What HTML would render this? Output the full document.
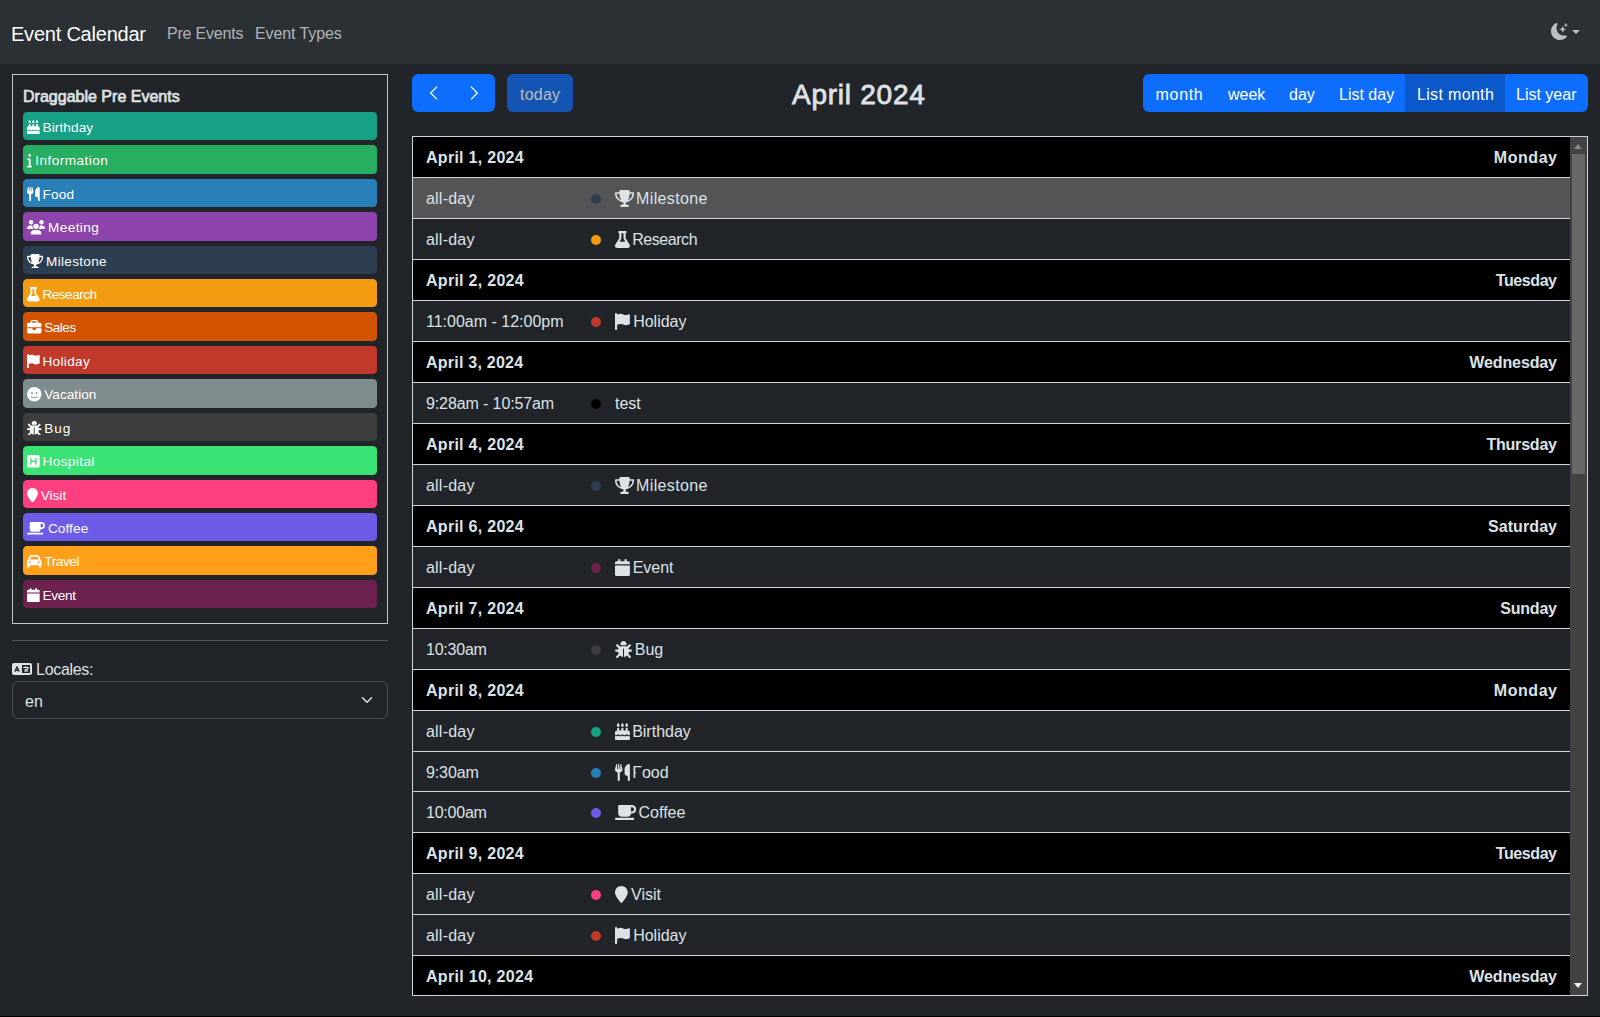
<!DOCTYPE html>
<html><head><meta charset="utf-8">
<style>
*{box-sizing:border-box;margin:0;padding:0}
html,body{width:1600px;height:1017px;overflow:hidden}
body{background:#212529;color:#dee2e6;font-family:"Liberation Sans",sans-serif;font-size:16px;position:relative}
.nav{position:absolute;left:0;top:0;width:1600px;height:64px;background:#2b3035}
.brand{position:absolute;left:11px;top:22px;font-size:20px;line-height:24px;color:#fff;letter-spacing:-0.22px;white-space:nowrap}
.nl{position:absolute;top:24px;font-size:16px;line-height:20px;color:rgba(255,255,255,.65);white-space:nowrap;letter-spacing:-0.55px}
.moon{position:absolute;left:1551px;top:23px}
.caret{position:absolute;left:1572px;top:30px;width:0;height:0;border-left:4px solid transparent;border-right:4px solid transparent;border-top:4px solid #bcbdbe}
.box{position:absolute;left:12px;top:74px;width:376px;height:550px;border:1px solid #c8c8c8}
.bt{position:absolute;left:10px;top:12px;font-size:16px;font-weight:400;-webkit-text-stroke:0.7px #dee2e6;line-height:20px;letter-spacing:0.01px;white-space:nowrap;color:#dee2e6}
.ev{position:absolute;left:10px;width:354px;height:28.4px;border:1px solid;border-radius:4px;color:#fff;font-size:13.6px;line-height:20.4px;white-space:nowrap;padding:5px 3px 0}
.evi{display:inline-block}
.evt{}
.sep{position:absolute;left:12px;top:640px;width:376px;height:1px;background:rgba(222,226,230,.25)}
.loc{position:absolute;left:12px;top:660px;white-space:nowrap;line-height:20px;letter-spacing:-0.33px}
.sel{position:absolute;left:12px;top:681px;width:376px;height:38px;border:1px solid #495057;border-radius:6px;background:#212529}
.selv{position:absolute;left:12px;top:8px;line-height:24px}
.chev{position:absolute;left:346px;top:12px}
.btn{position:absolute;top:74px;height:38px;background:#0d6efd;color:#fff;font-size:16px;line-height:24px;white-space:nowrap;border-radius:6px;overflow:hidden}
.grp1{left:412px;width:83px}
.chl{position:absolute;left:16.5px;top:11px}
.chr{position:absolute;left:57px;top:11px}
.today{left:507px;width:66px;background:#1454b3;color:#bcbdbe}
.today span{position:absolute;left:13px;top:9px;letter-spacing:0.22px}
.title{position:absolute;left:792px;top:79px;font-size:28px;line-height:32px;font-weight:400;-webkit-text-stroke:0.8px #dee2e6;letter-spacing:0.75px;white-space:nowrap;color:#dee2e6}
.grp2{left:1143px;width:445px}
.grp2 span{position:absolute;top:9px;z-index:1}
.act{position:absolute;left:262px;top:0;width:100px;height:38px;background:#0a58ca}
.list{position:absolute;left:412px;top:136px;width:1176px;height:860px;border:1px solid #ced4da;overflow:hidden;background:#212529}
.row{position:absolute;left:0;width:1157px;height:42px;border-top:1px solid #ced4da}
.row.h{background:#000;font-weight:700}
.row.h .t,.row.h .d{top:9.4px}
.row.hov{background:#535557}
.row .t{position:absolute;left:13px;top:9.4px;line-height:24px;white-space:nowrap}
.row .d{position:absolute;right:13px;top:10px;line-height:24px;white-space:nowrap}
.row .dot{position:absolute;left:178px;top:16px;width:10px;height:10px;border-radius:5px}
.row .ti{position:absolute;left:202px;top:9.4px;line-height:24px;white-space:nowrap}
.sb{position:absolute;left:1157px;top:0;width:17px;height:858px;background:#424242}
.sbu{position:absolute;left:4px;top:7px;width:0;height:0;border-left:4.5px solid transparent;border-right:4.5px solid transparent;border-bottom:5px solid #8a8a8a}
.sbd{position:absolute;left:4px;bottom:7px;width:0;height:0;border-left:4.5px solid transparent;border-right:4.5px solid transparent;border-top:5px solid #f0f0f0}
.thumb{position:absolute;left:2px;top:17px;width:13px;height:320px;background:#686868}

</style></head><body>
<div class="nav">
<div class="brand">Event Calendar</div>
<div class="nl" style="left:167px;letter-spacing:-0.2px">Pre Events</div>
<div class="nl" style="left:255px;letter-spacing:-0.1px">Event Types</div>
<svg class="moon" width="17" height="17" viewBox="0 0 16 16"><path fill="#bcbdbe" d="M6 .278a.768.768 0 0 1 .08.858 7.208 7.208 0 0 0-.878 3.46c0 4.021 3.278 7.277 7.318 7.277.527 0 1.04-.055 1.533-.16a.787.787 0 0 1 .81.316.733.733 0 0 1-.031.893A8.349 8.349 0 0 1 8.344 16C3.734 16 0 12.286 0 7.71 0 4.266 2.114 1.312 5.124.06A.752.752 0 0 1 6 .278z"/><path fill="#bcbdbe" d="M10.794 3.148a.217.217 0 0 1 .412 0l.387 1.162c.173.518.579.924 1.097 1.097l1.162.387a.217.217 0 0 1 0 .412l-1.162.387a1.734 1.734 0 0 0-1.097 1.097l-.387 1.162a.217.217 0 0 1-.412 0l-.387-1.162A1.734 1.734 0 0 0 9.31 6.593l-1.162-.387a.217.217 0 0 1 0-.412l1.162-.387a1.734 1.734 0 0 0 1.097-1.097l.387-1.162zM13.863.099a.145.145 0 0 1 .274 0l.258.774c.115.346.386.617.732.732l.774.258a.145.145 0 0 1 0 .274l-.774.258a1.156 1.156 0 0 0-.732.732l-.258.774a.145.145 0 0 1-.274 0l-.258-.774a1.156 1.156 0 0 0-.732-.732l-.774-.258a.145.145 0 0 1 0-.274l.774-.258c.346-.115.617-.386.732-.732L13.863.1z"/></svg>
<div class="caret"></div>
</div>
<div class="box"><div class="bt">Draggable Pre Events</div>
<div class="ev" style="top:36.90px;background:#16a085;border-color:#16a085"><span class="evi"><svg width="12.69" height="14.50" viewBox="0 0 448 512" style="vertical-align:-2.5px;margin-right:-1px"><path fill="#fff" d="M86.4 5.5L61.8 47.6C58 54.1 56 61.6 56 69.2V72c0 22.1 17.9 40 40 40s40-17.9 40-40V69.2c0-7.6-2-15-5.8-21.6L105.6 5.5C103.6 2.1 100 0 96 0s-7.6 2.1-9.6 5.5zm128 0L189.8 47.6c-3.8 6.5-5.8 14-5.8 21.6V72c0 22.1 17.9 40 40 40s40-17.9 40-40V69.2c0-7.6-2-15-5.8-21.6L233.6 5.5C231.6 2.1 228 0 224 0s-7.6 2.1-9.6 5.5zM317.8 47.6c-3.8 6.5-5.8 14-5.8 21.6V72c0 22.1 17.9 40 40 40s40-17.9 40-40V69.2c0-7.6-2-15-5.8-21.6L361.6 5.5C359.6 2.1 356 0 352 0s-7.6 2.1-9.6 5.5L317.8 47.6zM128 176c0-17.7-14.3-32-32-32s-32 14.3-32 32v48c-35.3 0-64 28.7-64 64v71c8.3 5.2 18.1 9 28.8 9c13.5 0 27.2-6.1 38.4-13.4c5.4-3.5 9.9-7.1 13-9.7c1.5-1.3 2.7-2.4 3.5-3.1c.4-.4 .7-.6 .8-.8l.1-.1c3.1-3.2 7.4-4.9 11.9-4.8s8.6 2.1 11.6 5.4l.1 .1c.1 .1 .4 .4 .7 .7c.7 .7 1.7 1.7 3.1 3c2.8 2.6 6.8 6.1 11.8 9.5c10.2 7.1 23 13.1 36.3 13.1s26.1-6 36.3-13.1c5-3.5 9-6.9 11.8-9.5c1.4-1.3 2.4-2.3 3.1-3c.3-.3 .6-.6 .7-.7l.1-.1c3-3.5 7.4-5.4 12-5.4s9 2 12 5.4l.1 .1c.1 .1 .4 .4 .7 .7c.7 .7 1.7 1.7 3.1 3c2.8 2.6 6.8 6.1 11.8 9.5c10.2 7.1 23 13.1 36.3 13.1s26.1-6 36.3-13.1c5-3.5 9-6.9 11.8-9.5c1.4-1.3 2.4-2.3 3.1-3c.3-.3 .6-.6 .7-.7l.1-.1c2.9-3.4 7.1-5.3 11.6-5.4s8.7 1.6 11.9 4.8l.1 .1c.2 .2 .4 .4 .8 .8c.8 .7 1.9 1.8 3.5 3.1c3.1 2.6 7.5 6.2 13 9.7c11.2 7.3 24.9 13.4 38.4 13.4c10.7 0 20.5-3.9 28.8-9V288c0-35.3-28.7-64-64-64V176c0-17.7-14.3-32-32-32s-32 14.3-32 32v48H256V176c0-17.7-14.3-32-32-32s-32 14.3-32 32v48H128V176zM448 394.6c-8.5 3.3-18.2 5.4-28.8 5.4c-22.5 0-42.4-9.9-55.8-18.6c-4.1-2.7-7.8-5.4-10.9-7.8c-2.8 2.4-6.1 5-9.8 7.5C329.8 390 310.6 400 288 400s-41.8-10-54.6-18.9c-3.5-2.4-6.7-4.9-9.4-7.2c-2.7 2.3-5.9 4.7-9.4 7.2C201.8 390 182.6 400 160 400s-41.8-10-54.6-18.9c-3.7-2.6-7-5.2-9.8-7.5c-3.1 2.4-6.8 5.1-11 7.8C71.2 390.1 51.3 400 28.8 400c-10.6 0-20.3-2.2-28.8-5.4V480c0 17.7 14.3 32 32 32H416c17.7 0 32-14.3 32-32V394.6z"/></svg></span> <span class="evt" style="letter-spacing:0.114px">Birthday</span></div>
<div class="ev" style="top:70.33px;background:#27ae60;border-color:#27ae60"><span class="evi"><svg width="5.44" height="14.50" viewBox="0 0 192 512" style="vertical-align:-2.5px;margin-right:-1px"><path fill="#fff" d="M48 80a48 48 0 1 1 96 0A48 48 0 1 1 48 80zM0 224c0-17.7 14.3-32 32-32H96c17.7 0 32 14.3 32 32V448h32c17.7 0 32 14.3 32 32s-14.3 32-32 32H32c-17.7 0-32-14.3-32-32s14.3-32 32-32H64V256H32c-17.7 0-32-14.3-32-32z"/></svg></span> <span class="evt" style="letter-spacing:0.45px">Information</span></div>
<div class="ev" style="top:103.76px;background:#2980b9;border-color:#2980b9"><span class="evi"><svg width="12.69" height="14.50" viewBox="0 0 448 512" style="vertical-align:-2.5px;margin-right:-1px"><path fill="#fff" d="M416 0C400 0 288 32 288 176V288c0 35.3 28.7 64 64 64h32V480c0 17.7 14.3 32 32 32s32-14.3 32-32V352 240 32c0-17.7-14.3-32-32-32zM64 16C64 7.8 57.9 1 49.7 .1S34.2 4.6 32.4 12.5L2.1 148.8C.7 155.1 0 161.5 0 167.9c0 45.9 35.1 83.6 80 87.7V480c0 17.7 14.3 32 32 32s32-14.3 32-32V255.6c44.9-4.1 80-41.8 80-87.7c0-6.4-.7-12.8-2.1-19.1L191.6 12.5c-1.8-8-9.3-13.3-17.4-12.4S160 7.8 160 16V150.2c0 5.4-4.4 9.8-9.8 9.8c-5.1 0-9.3-3.9-9.8-9L127.9 14.6C127.2 6.3 120.3 0 112 0s-15.2 6.3-15.9 14.6L83.7 151c-.5 5.1-4.7 9-9.8 9c-5.4 0-9.8-4.4-9.8-9.8V16z"/></svg></span> <span class="evt" style="letter-spacing:0.2px">Food</span></div>
<div class="ev" style="top:137.19px;background:#8e44ad;border-color:#8e44ad"><span class="evi"><svg width="18.12" height="14.50" viewBox="0 0 640 512" style="vertical-align:-2.5px;margin-right:-1px"><path fill="#fff" d="M144 0a80 80 0 1 1 0 160A80 80 0 1 1 144 0zM512 0a80 80 0 1 1 0 160A80 80 0 1 1 512 0zM0 298.7C0 239.8 47.8 192 106.7 192h42.7c15.9 0 31 3.5 44.6 9.7c-1.3 7.2-1.9 14.7-1.9 22.3c0 38.2 16.8 72.5 43.3 96c-.2 0-.4 0-.7 0H21.3C9.6 320 0 310.4 0 298.7zM405.3 320c-.2 0-.4 0-.7 0c26.6-23.5 43.3-57.8 43.3-96c0-7.6-.7-15-1.9-22.3c13.6-6.3 28.7-9.7 44.6-9.7h42.7C592.2 192 640 239.8 640 298.7c0 11.8-9.6 21.3-21.3 21.3H405.3zM224 224a96 96 0 1 1 192 0 96 96 0 1 1 -192 0zM128 485.3C128 411.7 187.7 352 261.3 352H378.7C452.3 352 512 411.7 512 485.3c0 14.7-11.9 26.7-26.7 26.7H154.7c-14.7 0-26.7-11.9-26.7-26.7z"/></svg></span> <span class="evt" style="letter-spacing:0.433px">Meeting</span></div>
<div class="ev" style="top:170.62px;background:#2c3e50;border-color:#2c3e50"><span class="evi"><svg width="16.31" height="14.50" viewBox="0 0 576 512" style="vertical-align:-2.5px;margin-right:-1px"><path fill="#fff" d="M400 0H176c-26.5 0-48.1 21.8-47.1 48.2c.2 5.3 .4 10.6 .7 15.8H24C10.7 64 0 74.7 0 88c0 92.6 33.5 157 78.5 200.7c44.3 43.1 98.3 64.8 138.1 75.8c23.4 6.5 39.4 26 39.4 45.6c0 20.9-17 37.9-37.9 37.9H192c-17.7 0-32 14.3-32 32s14.3 32 32 32H384c17.7 0 32-14.3 32-32s-14.3-32-32-32H357.9C337 448 320 431 320 410.1c0-19.6 15.9-39.2 39.4-45.6c39.9-11 93.9-32.7 138.2-75.8C542.5 245 576 180.6 576 88c0-13.3-10.7-24-24-24H446.4c.3-5.2 .5-10.4 .7-15.8C448.1 21.8 426.5 0 400 0zM48.9 112h84.4c9.1 90.1 29.2 150.3 51.9 190.6c-24.9-11-50.8-26.5-73.2-48.3c-32-31.1-58-76-63-142.3zM464.1 254.3c-22.4 21.8-48.3 37.3-73.2 48.3c22.7-40.3 42.8-100.5 51.9-190.6h84.4c-5.1 66.3-31.1 111.2-63 142.3z"/></svg></span> <span class="evt" style="letter-spacing:0.287px">Milestone</span></div>
<div class="ev" style="top:204.05px;background:#f39c12;border-color:#f39c12"><span class="evi"><svg width="12.69" height="14.50" viewBox="0 0 448 512" style="vertical-align:-2.5px;margin-right:-1px"><path fill="#fff" d="M288 0H160 128C110.3 0 96 14.3 96 32s14.3 32 32 32V196.8c0 11.8-3.3 23.5-9.5 33.5L10.3 406.2C3.6 417.2 0 429.7 0 442.6C0 480.9 31.1 512 69.4 512H378.6c38.3 0 69.4-31.1 69.4-69.4c0-12.8-3.6-25.4-10.3-36.4L329.5 230.4c-6.2-10.1-9.5-21.7-9.5-33.5V64c17.7 0 32-14.3 32-32s-14.3-32-32-32H288zM192 196.8V64h64V196.8c0 23.7 6.6 46.9 19 67.1L309.5 320h-171L173 263.9c12.4-20.2 19-43.4 19-67.1z"/></svg></span> <span class="evt" style="letter-spacing:-0.514px">Research</span></div>
<div class="ev" style="top:237.48px;background:#d35400;border-color:#d35400"><span class="evi"><svg width="14.50" height="14.50" viewBox="0 0 512 512" style="vertical-align:-2.5px;margin-right:-1px"><path fill="#fff" d="M184 48H328c4.4 0 8 3.6 8 8V96H176V56c0-4.4 3.6-8 8-8zm-56 8V96H64C28.7 96 0 124.7 0 160v96H192 320 512V160c0-35.3-28.7-64-64-64H384V56c0-30.9-25.1-56-56-56H184c-30.9 0-56 25.1-56 56zM512 288H320v32c0 17.7-14.3 32-32 32H224c-17.7 0-32-14.3-32-32V288H0V416c0 35.3 28.7 64 64 64H448c35.3 0 64-28.7 64-64V288z"/></svg></span> <span class="evt" style="letter-spacing:-0.525px">Sales</span></div>
<div class="ev" style="top:270.91px;background:#c0392b;border-color:#c0392b"><span class="evi"><svg width="12.69" height="14.50" viewBox="0 0 448 512" style="vertical-align:-2.5px;margin-right:-1px"><path fill="#fff" d="M64 32C64 14.3 49.7 0 32 0S0 14.3 0 32V64 368 480c0 17.7 14.3 32 32 32s32-14.3 32-32V352l64.3-16.1c41.1-10.3 84.6-5.5 122.5 13.4c44.2 22.1 95.5 24.8 141.7 7.4l34.7-13c12.5-4.7 20.8-16.6 20.8-30V66.1c0-23-24.2-38-44.8-27.7l-9.6 4.8c-46.3 23.2-100.8 23.2-147.1 0c-35.1-17.6-75.4-22-113.5-12.5L64 48V32z"/></svg></span> <span class="evt" style="letter-spacing:0.333px">Holiday</span></div>
<div class="ev" style="top:304.34px;background:#7f8c8d;border-color:#7f8c8d"><span class="evi"><svg width="14.50" height="14.50" viewBox="0 0 512 512" style="vertical-align:-2.5px;margin-right:-1px"><path fill="#fff" d="M256 512A256 256 0 1 0 256 0a256 256 0 1 0 0 512zM164.1 325.5C182 346.2 212.6 368 256 368s74-21.8 91.9-42.5c5.8-6.7 15.9-7.4 22.6-1.6s7.4 15.9 1.6 22.6C349.8 372.1 311.1 400 256 400s-93.8-27.9-116.1-53.5c-5.8-6.7-5.1-16.8 1.6-22.6s16.8-5.1 22.6 1.6zM144.4 208a32 32 0 1 1 64 0 32 32 0 1 1 -64 0zm192-32a32 32 0 1 1 0 64 32 32 0 1 1 0-64z"/></svg></span> <span class="evt" style="letter-spacing:0.029px">Vacation</span></div>
<div class="ev" style="top:337.77px;background:#3d3d3d;border-color:#3d3d3d"><span class="evi"><svg width="14.50" height="14.50" viewBox="0 0 512 512" style="vertical-align:-2.5px;margin-right:-1px"><path fill="#fff" d="M256 0c53 0 96 43 96 96v3.6c0 15.7-12.7 28.4-28.4 28.4H188.4c-15.7 0-28.4-12.7-28.4-28.4V96c0-53 43-96 96-96zM41.4 105.4c12.5-12.5 32.8-12.5 45.3 0l64 64c.7 .7 1.3 1.4 1.9 2.1c14.2-7.3 30.4-11.4 47.5-11.4H312c17.1 0 33.2 4.1 47.5 11.4c.6-.7 1.2-1.4 1.9-2.1l64-64c12.5-12.5 32.8-12.5 45.3 0s12.5 32.8 0 45.3l-64 64c-.7 .7-1.4 1.3-2.1 1.9c6.2 12 10.1 25.3 11.1 39.5H480c17.7 0 32 14.3 32 32s-14.3 32-32 32H416c0 24.6-5.5 47.8-15.4 68.6c2.2 1.3 4.2 2.9 6 4.8l64 64c12.5 12.5 12.5 32.8 0 45.3s-32.8 12.5-45.3 0l-63.1-63.1c-24.5 21.8-55.8 36.2-90.3 39.6V240c0-8.8-7.2-16-16-16s-16 7.2-16 16V479.2c-34.5-3.4-65.8-17.8-90.3-39.6L86.6 502.6c-12.5 12.5-32.8 12.5-45.3 0s-12.5-32.8 0-45.3l64-64c1.9-1.9 3.9-3.4 6-4.8C101.5 367.8 96 344.6 96 320H32c-17.7 0-32-14.3-32-32s14.3-32 32-32H96.3c1.1-14.1 5-27.5 11.1-39.5c-.7-.6-1.4-1.2-2.1-1.9l-64-64c-12.5-12.5-12.5-32.8 0-45.3z"/></svg></span> <span class="evt" style="letter-spacing:0.95px">Bug</span></div>
<div class="ev" style="top:371.20px;background:#3ae374;border-color:#3ae374"><span class="evi"><svg width="12.69" height="14.50" viewBox="0 0 448 512" style="vertical-align:-2.5px;margin-right:-1px"><path fill="#fff" d="M64 32C28.7 32 0 60.7 0 96V416c0 35.3 28.7 64 64 64H384c35.3 0 64-28.7 64-64V96c0-35.3-28.7-64-64-64H64zM336 152V256 360c0 13.3-10.7 24-24 24s-24-10.7-24-24V280H160l0 80c0 13.3-10.7 24-24 24s-24-10.7-24-24l0-208c0-13.3 10.7-24 24-24s24 10.7 24 24v80H288V152c0-13.3 10.7-24 24-24s24 10.7 24 24z"/></svg></span> <span class="evt" style="letter-spacing:0.4px">Hospital</span></div>
<div class="ev" style="top:404.63px;background:#ff3f7f;border-color:#ff3f7f"><span class="evi"><svg width="10.88" height="14.50" viewBox="0 0 384 512" style="vertical-align:-2.5px;margin-right:-1px"><path fill="#fff" d="M384 192c0 87.4-117 243-168.3 307.2c-12.3 15.3-35.1 15.3-47.4 0C117 435 0 279.4 0 192C0 86 86 0 192 0S384 86 384 192z"/></svg></span> <span class="evt" style="letter-spacing:0.025px">Visit</span></div>
<div class="ev" style="top:438.06px;background:#6c5ce7;border-color:#6c5ce7"><span class="evi"><svg width="18.12" height="14.50" viewBox="0 0 640 512" style="vertical-align:-2.5px;margin-right:-1px"><path fill="#fff" d="M96 64c0-17.7 14.3-32 32-32H448h64c70.7 0 128 57.3 128 128s-57.3 128-128 128H480c0 53-43 96-96 96H192c-53 0-96-43-96-96V64zM480 224h32c35.3 0 64-28.7 64-64s-28.7-64-64-64H480V224zM32 416H544c17.7 0 32 14.3 32 32s-14.3 32-32 32H32c-17.7 0-32-14.3-32-32s14.3-32 32-32z"/></svg></span> <span class="evt" style="letter-spacing:0.1px">Coffee</span></div>
<div class="ev" style="top:471.49px;background:#ff9f1a;border-color:#ff9f1a"><span class="evi"><svg width="14.50" height="14.50" viewBox="0 0 512 512" style="vertical-align:-2.5px;margin-right:-1px"><path fill="#fff" d="M135.2 117.4L109.1 192H402.9l-26.1-74.6C372.3 104.6 360.2 96 346.6 96H165.4c-13.6 0-25.7 8.6-30.2 21.4zM39.6 196.8L74.8 96.3C88.3 57.8 124.6 32 165.4 32H346.6c40.8 0 77.1 25.8 90.6 64.3l35.2 100.5c23.2 9.6 39.6 32.5 39.6 59.2V400v48c0 17.7-14.3 32-32 32H448c-17.7 0-32-14.3-32-32V400H96v48c0 17.7-14.3 32-32 32H32c-17.7 0-32-14.3-32-32V400 256c0-26.7 16.4-49.6 39.6-59.2zM128 288a32 32 0 1 0 -64 0 32 32 0 1 0 64 0zm288 32a32 32 0 1 0 0-64 32 32 0 1 0 0 64z"/></svg></span> <span class="evt" style="letter-spacing:-0.42px">Travel</span></div>
<div class="ev" style="top:504.92px;background:#6d214f;border-color:#6d214f"><span class="evi"><svg width="12.69" height="14.50" viewBox="0 0 448 512" style="vertical-align:-2.5px;margin-right:-1px"><path fill="#fff" d="M96 32V64H48C21.5 64 0 85.5 0 112v48H448V112c0-26.5-21.5-48-48-48H352V32c0-17.7-14.3-32-32-32s-32 14.3-32 32V64H160V32c0-17.7-14.3-32-32-32S96 14.3 96 32zM448 192H0V464c0 26.5 21.5 48 48 48H400c26.5 0 48-21.5 48-48V192z"/></svg></span> <span class="evt" style="letter-spacing:-0.325px">Event</span></div>
</div>
<div class="sep"></div>
<div class="loc"><svg width="20.00" height="16.00" viewBox="0 0 640 512" style="vertical-align:-2px"><path fill="#dee2e6" d="M0 128C0 92.7 28.7 64 64 64H256h48 16H576c35.3 0 64 28.7 64 64V384c0 35.3-28.7 64-64 64H320 304 256 64c-35.3 0-64-28.7-64-64V128zm320 0V384H576V128H320zM178.3 175.9c-3.2-7.2-10.4-11.9-18.3-11.9s-15.1 4.7-18.3 11.9l-64 144c-4.5 10.1 .1 21.9 10.2 26.4s21.9-.1 26.4-10.2l8.9-20.1h73.6l8.9 20.1c4.5 10.1 16.3 14.6 26.4 10.2s14.6-16.3 10.2-26.4l-64-144zM160 233.2L179 276H141l19-42.8zM448 164c11 0 20 9 20 20v4h44 16c11 0 20 9 20 20s-9 20-20 20h-2l-1.6 4.5c-8.9 24.4-22.4 46.6-39.6 65.4c.9 .6 1.8 1.1 2.7 1.6l18.9 11.3c9.5 5.7 12.5 18 6.9 27.4s-18 12.5-27.4 6.9l-18.9-11.3c-4.5-2.7-8.8-5.5-13.1-8.5c-10.6 7.5-21.9 14-34 19.4l-3.6 1.6c-10.1 4.5-21.9-.1-26.4-10.2s.1-21.9 10.2-26.4l3.6-1.6c6.4-2.9 12.6-6.1 18.5-9.8l-12.2-12.2c-7.8-7.8-7.8-20.5 0-28.3s20.5-7.8 28.3 0l14.6 14.6 .5 .5c12.4-13.1 22.5-28.3 29.8-45H448 376c-11 0-20-9-20-20s9-20 20-20h52v-4c0-11 9-20 20-20z"/></svg> Locales:</div>
<div class="sel"><span class="selv">en</span><svg class="chev" width="16" height="12" viewBox="0 0 16 16"><path fill="none" stroke="#dee2e6" stroke-linecap="round" stroke-linejoin="round" stroke-width="2" d="m2 5 6 6 6-6"/></svg></div>
<div class="btn grp1"><svg class="chl" width="10" height="16" viewBox="0 0 10 16"><path fill="none" stroke="#fff" stroke-width="1.3" d="M8 1.6 1.7 8 8 14.4"/></svg><svg class="chr" width="10" height="16" viewBox="0 0 10 16"><path fill="none" stroke="#fff" stroke-width="1.3" d="M2 1.6 8.3 8 2 14.4"/></svg></div>
<div class="btn today"><span>today</span></div>
<div class="title">April 2024</div>
<div class="btn grp2"><span style="left:12.5px;letter-spacing:0.7px">month</span><span style="left:85px">week</span><span style="left:146px">day</span><span style="left:196px">List day</span><div class="act"></div><span style="left:274px;letter-spacing:0.33px">List month</span><span style="left:373px">List year</span></div>
<div class="list">
<div class="row h" style="top:-1px"><span class="t" style="letter-spacing:0.28px">April 1, 2024</span><span class="d" style="letter-spacing:0.56px;right:12.44px">Monday</span></div>
<div class="row hov" style="top:40px"><span class="t" style="letter-spacing:0.21px">all-day</span><span class="dot" style="background:#2c3e50"></span><span class="ti"><svg width="19.12" height="17.00" viewBox="0 0 576 512" style="vertical-align:-2.6px;margin-right:-2.5px"><path fill="#dee2e6" d="M400 0H176c-26.5 0-48.1 21.8-47.1 48.2c.2 5.3 .4 10.6 .7 15.8H24C10.7 64 0 74.7 0 88c0 92.6 33.5 157 78.5 200.7c44.3 43.1 98.3 64.8 138.1 75.8c23.4 6.5 39.4 26 39.4 45.6c0 20.9-17 37.9-37.9 37.9H192c-17.7 0-32 14.3-32 32s14.3 32 32 32H384c17.7 0 32-14.3 32-32s-14.3-32-32-32H357.9C337 448 320 431 320 410.1c0-19.6 15.9-39.2 39.4-45.6c39.9-11 93.9-32.7 138.2-75.8C542.5 245 576 180.6 576 88c0-13.3-10.7-24-24-24H446.4c.3-5.2 .5-10.4 .7-15.8C448.1 21.8 426.5 0 400 0zM48.9 112h84.4c9.1 90.1 29.2 150.3 51.9 190.6c-24.9-11-50.8-26.5-73.2-48.3c-32-31.1-58-76-63-142.3zM464.1 254.3c-22.4 21.8-48.3 37.3-73.2 48.3c22.7-40.3 42.8-100.5 51.9-190.6h84.4c-5.1 66.3-31.1 111.2-63 142.3z"/></svg> <span style="letter-spacing:0.36px">Milestone</span></span></div>
<div class="row" style="top:81px"><span class="t" style="letter-spacing:0.21px">all-day</span><span class="dot" style="background:#f39c12"></span><span class="ti"><svg width="14.88" height="17.00" viewBox="0 0 448 512" style="vertical-align:-2.6px;margin-right:-2.2px"><path fill="#dee2e6" d="M288 0H160 128C110.3 0 96 14.3 96 32s14.3 32 32 32V196.8c0 11.8-3.3 23.5-9.5 33.5L10.3 406.2C3.6 417.2 0 429.7 0 442.6C0 480.9 31.1 512 69.4 512H378.6c38.3 0 69.4-31.1 69.4-69.4c0-12.8-3.6-25.4-10.3-36.4L329.5 230.4c-6.2-10.1-9.5-21.7-9.5-33.5V64c17.7 0 32-14.3 32-32s-14.3-32-32-32H288zM192 196.8V64h64V196.8c0 23.7 6.6 46.9 19 67.1L309.5 320h-171L173 263.9c12.4-20.2 19-43.4 19-67.1z"/></svg> <span style="letter-spacing:-0.44px">Research</span></span></div>
<div class="row h" style="top:122px"><span class="t" style="letter-spacing:0.28px">April 2, 2024</span><span class="d" style="letter-spacing:-0.43px;right:13.43px">Tuesday</span></div>
<div class="row" style="top:163px"><span class="t" style="letter-spacing:0.00px">11:00am - 12:00pm</span><span class="dot" style="background:#c0392b"></span><span class="ti"><svg width="14.88" height="17.00" viewBox="0 0 448 512" style="vertical-align:-2.6px;margin-right:-1.2px"><path fill="#dee2e6" d="M64 32C64 14.3 49.7 0 32 0S0 14.3 0 32V64 368 480c0 17.7 14.3 32 32 32s32-14.3 32-32V352l64.3-16.1c41.1-10.3 84.6-5.5 122.5 13.4c44.2 22.1 95.5 24.8 141.7 7.4l34.7-13c12.5-4.7 20.8-16.6 20.8-30V66.1c0-23-24.2-38-44.8-27.7l-9.6 4.8c-46.3 23.2-100.8 23.2-147.1 0c-35.1-17.6-75.4-22-113.5-12.5L64 48V32z"/></svg> <span>Holiday</span></span></div>
<div class="row h" style="top:204px"><span class="t" style="letter-spacing:0.23px">April 3, 2024</span><span class="d" style="letter-spacing:-0.12px;right:13.12px">Wednesday</span></div>
<div class="row" style="top:245px"><span class="t" style="letter-spacing:-0.11px">9:28am - 10:57am</span><span class="dot" style="background:#000000"></span><span class="ti"><span>test</span></span></div>
<div class="row h" style="top:286px"><span class="t" style="letter-spacing:0.28px">April 4, 2024</span><span class="d" style="letter-spacing:-0.20px;right:13.20px">Thursday</span></div>
<div class="row" style="top:327px"><span class="t" style="letter-spacing:0.21px">all-day</span><span class="dot" style="background:#2c3e50"></span><span class="ti"><svg width="19.12" height="17.00" viewBox="0 0 576 512" style="vertical-align:-2.6px;margin-right:-2.5px"><path fill="#dee2e6" d="M400 0H176c-26.5 0-48.1 21.8-47.1 48.2c.2 5.3 .4 10.6 .7 15.8H24C10.7 64 0 74.7 0 88c0 92.6 33.5 157 78.5 200.7c44.3 43.1 98.3 64.8 138.1 75.8c23.4 6.5 39.4 26 39.4 45.6c0 20.9-17 37.9-37.9 37.9H192c-17.7 0-32 14.3-32 32s14.3 32 32 32H384c17.7 0 32-14.3 32-32s-14.3-32-32-32H357.9C337 448 320 431 320 410.1c0-19.6 15.9-39.2 39.4-45.6c39.9-11 93.9-32.7 138.2-75.8C542.5 245 576 180.6 576 88c0-13.3-10.7-24-24-24H446.4c.3-5.2 .5-10.4 .7-15.8C448.1 21.8 426.5 0 400 0zM48.9 112h84.4c9.1 90.1 29.2 150.3 51.9 190.6c-24.9-11-50.8-26.5-73.2-48.3c-32-31.1-58-76-63-142.3zM464.1 254.3c-22.4 21.8-48.3 37.3-73.2 48.3c22.7-40.3 42.8-100.5 51.9-190.6h84.4c-5.1 66.3-31.1 111.2-63 142.3z"/></svg> <span style="letter-spacing:0.36px">Milestone</span></span></div>
<div class="row h" style="top:368px"><span class="t" style="letter-spacing:0.28px">April 6, 2024</span><span class="d" style="letter-spacing:0.08px;right:12.92px">Saturday</span></div>
<div class="row" style="top:409px"><span class="t" style="letter-spacing:0.21px">all-day</span><span class="dot" style="background:#6d214f"></span><span class="ti"><svg width="14.88" height="17.00" viewBox="0 0 448 512" style="vertical-align:-2.6px;margin-right:-1.7px"><path fill="#dee2e6" d="M96 32V64H48C21.5 64 0 85.5 0 112v48H448V112c0-26.5-21.5-48-48-48H352V32c0-17.7-14.3-32-32-32s-32 14.3-32 32V64H160V32c0-17.7-14.3-32-32-32S96 14.3 96 32zM448 192H0V464c0 26.5 21.5 48 48 48H400c26.5 0 48-21.5 48-48V192z"/></svg> <span>Event</span></span></div>
<div class="row h" style="top:450px"><span class="t" style="letter-spacing:0.28px">April 7, 2024</span><span class="d" style="letter-spacing:-0.20px;right:13.20px">Sunday</span></div>
<div class="row" style="top:491px"><span class="t" style="letter-spacing:-0.23px">10:30am</span><span class="dot" style="background:#3d3d3d"></span><span class="ti"><svg width="17.00" height="17.00" viewBox="0 0 512 512" style="vertical-align:-2.6px;margin-right:-1.7px"><path fill="#dee2e6" d="M256 0c53 0 96 43 96 96v3.6c0 15.7-12.7 28.4-28.4 28.4H188.4c-15.7 0-28.4-12.7-28.4-28.4V96c0-53 43-96 96-96zM41.4 105.4c12.5-12.5 32.8-12.5 45.3 0l64 64c.7 .7 1.3 1.4 1.9 2.1c14.2-7.3 30.4-11.4 47.5-11.4H312c17.1 0 33.2 4.1 47.5 11.4c.6-.7 1.2-1.4 1.9-2.1l64-64c12.5-12.5 32.8-12.5 45.3 0s12.5 32.8 0 45.3l-64 64c-.7 .7-1.4 1.3-2.1 1.9c6.2 12 10.1 25.3 11.1 39.5H480c17.7 0 32 14.3 32 32s-14.3 32-32 32H416c0 24.6-5.5 47.8-15.4 68.6c2.2 1.3 4.2 2.9 6 4.8l64 64c12.5 12.5 12.5 32.8 0 45.3s-32.8 12.5-45.3 0l-63.1-63.1c-24.5 21.8-55.8 36.2-90.3 39.6V240c0-8.8-7.2-16-16-16s-16 7.2-16 16V479.2c-34.5-3.4-65.8-17.8-90.3-39.6L86.6 502.6c-12.5 12.5-32.8 12.5-45.3 0s-12.5-32.8 0-45.3l64-64c1.9-1.9 3.9-3.4 6-4.8C101.5 367.8 96 344.6 96 320H32c-17.7 0-32-14.3-32-32s14.3-32 32-32H96.3c1.1-14.1 5-27.5 11.1-39.5c-.7-.6-1.4-1.2-2.1-1.9l-64-64c-12.5-12.5-12.5-32.8 0-45.3z"/></svg> <span>Bug</span></span></div>
<div class="row h" style="top:532px"><span class="t" style="letter-spacing:0.28px">April 8, 2024</span><span class="d" style="letter-spacing:0.56px;right:12.44px">Monday</span></div>
<div class="row" style="top:573px"><span class="t" style="letter-spacing:0.21px">all-day</span><span class="dot" style="background:#16a085"></span><span class="ti"><svg width="14.88" height="17.00" viewBox="0 0 448 512" style="vertical-align:-2.6px;margin-right:-2.2px"><path fill="#dee2e6" d="M86.4 5.5L61.8 47.6C58 54.1 56 61.6 56 69.2V72c0 22.1 17.9 40 40 40s40-17.9 40-40V69.2c0-7.6-2-15-5.8-21.6L105.6 5.5C103.6 2.1 100 0 96 0s-7.6 2.1-9.6 5.5zm128 0L189.8 47.6c-3.8 6.5-5.8 14-5.8 21.6V72c0 22.1 17.9 40 40 40s40-17.9 40-40V69.2c0-7.6-2-15-5.8-21.6L233.6 5.5C231.6 2.1 228 0 224 0s-7.6 2.1-9.6 5.5zM317.8 47.6c-3.8 6.5-5.8 14-5.8 21.6V72c0 22.1 17.9 40 40 40s40-17.9 40-40V69.2c0-7.6-2-15-5.8-21.6L361.6 5.5C359.6 2.1 356 0 352 0s-7.6 2.1-9.6 5.5L317.8 47.6zM128 176c0-17.7-14.3-32-32-32s-32 14.3-32 32v48c-35.3 0-64 28.7-64 64v71c8.3 5.2 18.1 9 28.8 9c13.5 0 27.2-6.1 38.4-13.4c5.4-3.5 9.9-7.1 13-9.7c1.5-1.3 2.7-2.4 3.5-3.1c.4-.4 .7-.6 .8-.8l.1-.1c3.1-3.2 7.4-4.9 11.9-4.8s8.6 2.1 11.6 5.4l.1 .1c.1 .1 .4 .4 .7 .7c.7 .7 1.7 1.7 3.1 3c2.8 2.6 6.8 6.1 11.8 9.5c10.2 7.1 23 13.1 36.3 13.1s26.1-6 36.3-13.1c5-3.5 9-6.9 11.8-9.5c1.4-1.3 2.4-2.3 3.1-3c.3-.3 .6-.6 .7-.7l.1-.1c3-3.5 7.4-5.4 12-5.4s9 2 12 5.4l.1 .1c.1 .1 .4 .4 .7 .7c.7 .7 1.7 1.7 3.1 3c2.8 2.6 6.8 6.1 11.8 9.5c10.2 7.1 23 13.1 36.3 13.1s26.1-6 36.3-13.1c5-3.5 9-6.9 11.8-9.5c1.4-1.3 2.4-2.3 3.1-3c.3-.3 .6-.6 .7-.7l.1-.1c2.9-3.4 7.1-5.3 11.6-5.4s8.7 1.6 11.9 4.8l.1 .1c.2 .2 .4 .4 .8 .8c.8 .7 1.9 1.8 3.5 3.1c3.1 2.6 7.5 6.2 13 9.7c11.2 7.3 24.9 13.4 38.4 13.4c10.7 0 20.5-3.9 28.8-9V288c0-35.3-28.7-64-64-64V176c0-17.7-14.3-32-32-32s-32 14.3-32 32v48H256V176c0-17.7-14.3-32-32-32s-32 14.3-32 32v48H128V176zM448 394.6c-8.5 3.3-18.2 5.4-28.8 5.4c-22.5 0-42.4-9.9-55.8-18.6c-4.1-2.7-7.8-5.4-10.9-7.8c-2.8 2.4-6.1 5-9.8 7.5C329.8 390 310.6 400 288 400s-41.8-10-54.6-18.9c-3.5-2.4-6.7-4.9-9.4-7.2c-2.7 2.3-5.9 4.7-9.4 7.2C201.8 390 182.6 400 160 400s-41.8-10-54.6-18.9c-3.7-2.6-7-5.2-9.8-7.5c-3.1 2.4-6.8 5.1-11 7.8C71.2 390.1 51.3 400 28.8 400c-10.6 0-20.3-2.2-28.8-5.4V480c0 17.7 14.3 32 32 32H416c17.7 0 32-14.3 32-32V394.6z"/></svg> <span>Birthday</span></span></div>
<div class="row" style="top:614px"><span class="t" style="letter-spacing:-0.12px">9:30am</span><span class="dot" style="background:#2980b9"></span><span class="ti"><svg width="14.88" height="17.00" viewBox="0 0 448 512" style="vertical-align:-2.6px;margin-right:-2.2px"><path fill="#dee2e6" d="M416 0C400 0 288 32 288 176V288c0 35.3 28.7 64 64 64h32V480c0 17.7 14.3 32 32 32s32-14.3 32-32V352 240 32c0-17.7-14.3-32-32-32zM64 16C64 7.8 57.9 1 49.7 .1S34.2 4.6 32.4 12.5L2.1 148.8C.7 155.1 0 161.5 0 167.9c0 45.9 35.1 83.6 80 87.7V480c0 17.7 14.3 32 32 32s32-14.3 32-32V255.6c44.9-4.1 80-41.8 80-87.7c0-6.4-.7-12.8-2.1-19.1L191.6 12.5c-1.8-8-9.3-13.3-17.4-12.4S160 7.8 160 16V150.2c0 5.4-4.4 9.8-9.8 9.8c-5.1 0-9.3-3.9-9.8-9L127.9 14.6C127.2 6.3 120.3 0 112 0s-15.2 6.3-15.9 14.6L83.7 151c-.5 5.1-4.7 9-9.8 9c-5.4 0-9.8-4.4-9.8-9.8V16z"/></svg> <span>Food</span></span></div>
<div class="row" style="top:654px"><span class="t" style="letter-spacing:-0.23px">10:00am</span><span class="dot" style="background:#6c5ce7"></span><span class="ti"><svg width="21.25" height="17.00" viewBox="0 0 640 512" style="vertical-align:-2.6px;margin-right:-2.2px"><path fill="#dee2e6" d="M96 64c0-17.7 14.3-32 32-32H448h64c70.7 0 128 57.3 128 128s-57.3 128-128 128H480c0 53-43 96-96 96H192c-53 0-96-43-96-96V64zM480 224h32c35.3 0 64-28.7 64-64s-28.7-64-64-64H480V224zM32 416H544c17.7 0 32 14.3 32 32s-14.3 32-32 32H32c-17.7 0-32-14.3-32-32s14.3-32 32-32z"/></svg> <span>Coffee</span></span></div>
<div class="row h" style="top:695px"><span class="t" style="letter-spacing:0.28px">April 9, 2024</span><span class="d" style="letter-spacing:-0.43px;right:13.43px">Tuesday</span></div>
<div class="row" style="top:736px"><span class="t" style="letter-spacing:0.21px">all-day</span><span class="dot" style="background:#ff3f7f"></span><span class="ti"><svg width="12.75" height="17.00" viewBox="0 0 384 512" style="vertical-align:-2.6px;margin-right:-1.2px"><path fill="#dee2e6" d="M384 192c0 87.4-117 243-168.3 307.2c-12.3 15.3-35.1 15.3-47.4 0C117 435 0 279.4 0 192C0 86 86 0 192 0S384 86 384 192z"/></svg> <span>Visit</span></span></div>
<div class="row" style="top:777px"><span class="t" style="letter-spacing:0.21px">all-day</span><span class="dot" style="background:#c0392b"></span><span class="ti"><svg width="14.88" height="17.00" viewBox="0 0 448 512" style="vertical-align:-2.6px;margin-right:-1.2px"><path fill="#dee2e6" d="M64 32C64 14.3 49.7 0 32 0S0 14.3 0 32V64 368 480c0 17.7 14.3 32 32 32s32-14.3 32-32V352l64.3-16.1c41.1-10.3 84.6-5.5 122.5 13.4c44.2 22.1 95.5 24.8 141.7 7.4l34.7-13c12.5-4.7 20.8-16.6 20.8-30V66.1c0-23-24.2-38-44.8-27.7l-9.6 4.8c-46.3 23.2-100.8 23.2-147.1 0c-35.1-17.6-75.4-22-113.5-12.5L64 48V32z"/></svg> <span>Holiday</span></span></div>
<div class="row h" style="top:818px"><span class="t" style="letter-spacing:0.30px">April 10, 2024</span><span class="d" style="letter-spacing:-0.12px;right:13.12px">Wednesday</span></div>
<div style="position:absolute;left:223px;top:635px;width:6px;height:2px;background:#212529"></div>
<div class="sb"><div class="sbu"></div><div class="thumb"></div><div class="sbd"></div></div>
</div>
<div style="position:absolute;left:0;top:1016px;width:1600px;height:1px;background:#000"></div>
</body></html>
